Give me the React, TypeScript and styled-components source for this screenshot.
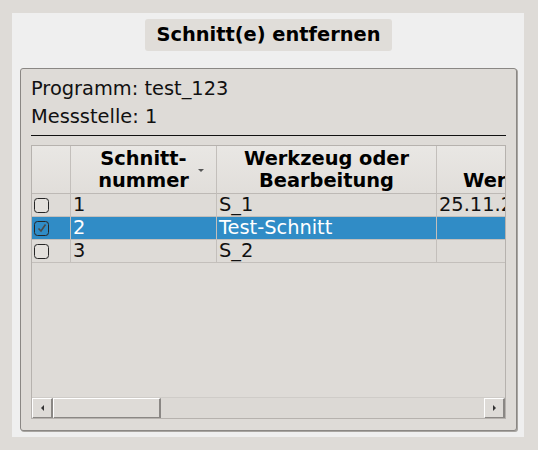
import styled, { createGlobalStyle } from "styled-components"

const GlobalStyle = createGlobalStyle`
  html, body {
    margin: 0;
    padding: 0;
    background: #dedbd7;
    font-family: "DejaVu Sans", "Liberation Sans", sans-serif;
    color: #111;
  }
  * {
    box-sizing: border-box;
  }
`

const Screen = styled.div`
  width: 538px;
  height: 450px;
  padding: 13px 14px 13px 12px;
`

const Panel = styled.div`
  height: 424px;
  background: #efefef;
  padding: 6px 7px 6px 8px;
  display: flex;
  flex-direction: column;
  align-items: center;
`

const TitleButton = styled.div`
  height: 32px;
  padding: 0 11px;
  border-radius: 3px;
  background: #e0ddd9;
  font-weight: bold;
  font-size: 19.4px;
  line-height: 32px;
  color: #000;
`

const GroupBox = styled.div`
  align-self: stretch;
  margin-top: 17px;
  flex: 1;
  background: #dedbd7;
  border: 1px solid #8a8784;
  border-radius: 3px;
  box-shadow: 1px 1px 0 #a8a5a1;
  padding: 6px 10px 11px 10px;
  display: flex;
  flex-direction: column;
`

const InfoLine = styled.div`
  height: 28px;
  line-height: 28px;
  font-size: 19.4px;
  color: #111;
`

const Divider = styled.div`
  height: 1px;
  background: #111;
  margin: 4px 0 9px;
`

const TableFrame = styled.div`
  flex: 1;
  border: 1px solid #b6b2ae;
  display: flex;
  flex-direction: column;
  overflow: hidden;
`

const Viewport = styled.div`
  flex: 1;
  overflow: hidden;
`

const Grid = styled.div`
  display: grid;
  grid-template-columns: 39px 146px 220px 220px;
`

const HeaderCell = styled.div<{ $align?: "center" | "left" }>`
  position: relative;
  height: 48px;
  border-right: 1px solid #c3bfbb;
  border-bottom: 1px solid #bdb9b5;
  background: linear-gradient(#e9e7e4, #e1deda);
  font-weight: bold;
  font-size: 19.4px;
  line-height: 21.5px;
  color: #000;
  display: flex;
  flex-direction: column;
  justify-content: center;
  align-items: ${(p) => (p.$align === "left" ? "flex-start" : "center")};
  padding-left: ${(p) => (p.$align === "left" ? "26px" : "0")};
  white-space: nowrap;
  overflow: hidden;
`

const SortArrow = styled.span`
  position: absolute;
  right: 12px;
  top: 23px;
  width: 0;
  height: 0;
  border-left: 3px solid transparent;
  border-right: 3px solid transparent;
  border-top: 3px solid #555;
`

const Cell = styled.div<{ $selected?: boolean }>`
  height: 23px;
  border-right: 1px solid #c3bfbb;
  border-bottom: 1px solid #c3bfbb;
  background: ${(p) => (p.$selected ? "#308cc6" : "transparent")};
  color: ${(p) => (p.$selected ? "#fff" : "#111")};
  font-size: 19.4px;
  line-height: 22px;
  padding-left: 2px;
  white-space: nowrap;
  overflow: hidden;
  display: flex;
  align-items: center;
`

const Check = styled.span<{ $checked?: boolean }>`
  width: 15px;
  height: 15px;
  border: 1.5px solid #262626;
  border-radius: 3.5px;
  background: ${(p) => (p.$checked ? "transparent" : "#e4e1dd")};
  display: flex;
  align-items: center;
  justify-content: center;
`

const ScrollBar = styled.div`
  height: 21px;
  display: flex;
  border-top: 1px solid #cfccc8;
  background: #dcd9d5;
`

const ScrollButton = styled.div<{ $width?: number }>`
  width: ${(p) => p.$width ?? 21}px;
  height: 21px;
  border-top: 1px solid #fff;
  border-left: 1px solid #fff;
  border-right: 2px solid #8a8784;
  border-bottom: 2px solid #8a8784;
  background: #dedbd7;
  display: flex;
  align-items: center;
  justify-content: center;
`

const Spacer = styled.div`
  flex: 1;
`

const Arrow = styled.span<{ $dir: "left" | "right" }>`
  width: 0;
  height: 0;
  border-top: 3px solid transparent;
  border-bottom: 3px solid transparent;
  ${(p) =>
    p.$dir === "left"
      ? "border-right: 3px solid #333;"
      : "border-left: 3px solid #333;"}
`

const rows = [
  { nr: "1", tool: "S_1", date: "25.11.2025", checked: false },
  { nr: "2", tool: "Test-Schnitt", date: "", checked: true },
  { nr: "3", tool: "S_2", date: "", checked: false },
]

export default function App() {
  return (
    <>
      <GlobalStyle />
      <Screen>
        <Panel>
          <TitleButton>Schnitt(e) entfernen</TitleButton>
          <GroupBox>
            <InfoLine>Programm: test_123</InfoLine>
            <InfoLine>Messstelle: 1</InfoLine>
            <Divider />
            <TableFrame>
              <Viewport>
                <Grid>
                  <HeaderCell />
                  <HeaderCell>
                    <span>Schnitt-</span>
                    <span>nummer</span>
                    <SortArrow />
                  </HeaderCell>
                  <HeaderCell>
                    <span>Werkzeug oder</span>
                    <span>Bearbeitung</span>
                  </HeaderCell>
                  <HeaderCell $align="left">
                    <span>&nbsp;</span>
                    <span>Werkzeugwechsel</span>
                  </HeaderCell>
                  {rows.map((r) => (
                    <>
                      <Cell key={r.nr + "c"} $selected={r.checked}>
                        <Check $checked={r.checked}>
                          {r.checked && (
                            <svg width="10" height="10" viewBox="0 0 10 10">
                              <path d="M1.5 5.5 L4 8 L8.5 1.5" fill="none" stroke="#4a4a4a" strokeWidth="1.6" />
                            </svg>
                          )}
                        </Check>
                      </Cell>
                      <Cell key={r.nr + "n"} $selected={r.checked}>{r.nr}</Cell>
                      <Cell key={r.nr + "t"} $selected={r.checked}>{r.tool}</Cell>
                      <Cell key={r.nr + "d"} $selected={r.checked}>{r.date}</Cell>
                    </>
                  ))}
                </Grid>
              </Viewport>
              <ScrollBar>
                <ScrollButton>
                  <Arrow $dir="left" />
                </ScrollButton>
                <ScrollButton $width={108} />
                <Spacer />
                <ScrollButton>
                  <Arrow $dir="right" />
                </ScrollButton>
              </ScrollBar>
            </TableFrame>
          </GroupBox>
        </Panel>
      </Screen>
    </>
  )
}
